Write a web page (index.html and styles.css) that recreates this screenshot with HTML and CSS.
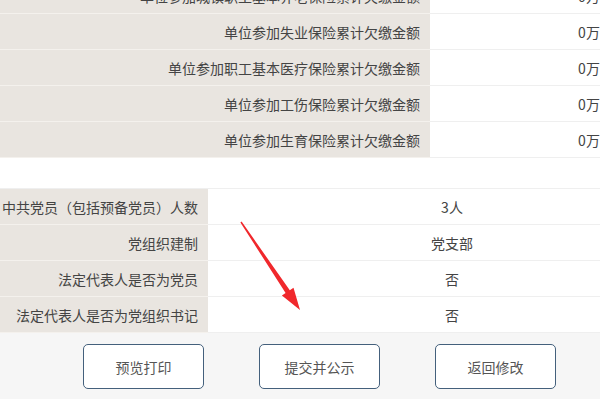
FILE: index.html
```html
<!DOCTYPE html>
<html>
  <head>
    <meta charset="utf-8" />
    <title>年报预览</title>
    <link rel="stylesheet" href="styles.css">
  </head>
  <body>
    <div class="page">
      <table class="info info1">
        <tr><td class="label">单位参加城镇职工基本养老保险累计欠缴金额</td><td class="val">0万元</td></tr>
        <tr><td class="label">单位参加失业保险累计欠缴金额</td><td class="val">0万元</td></tr>
        <tr><td class="label">单位参加职工基本医疗保险累计欠缴金额</td><td class="val">0万元</td></tr>
        <tr><td class="label">单位参加工伤保险累计欠缴金额</td><td class="val">0万元</td></tr>
        <tr><td class="label">单位参加生育保险累计欠缴金额</td><td class="val">0万元</td></tr>
      </table>

      <table class="info info2">
        <tr><td class="label">中共党员（包括预备党员）人数</td><td class="val">3人</td></tr>
        <tr><td class="label">党组织建制</td><td class="val">党支部</td></tr>
        <tr><td class="label">法定代表人是否为党员</td><td class="val">否</td></tr>
        <tr><td class="label">法定代表人是否为党组织书记</td><td class="val">否</td></tr>
      </table>

      <div class="btns">
        <button class="btn">预览打印</button>
        <button class="btn">提交并公示</button>
        <button class="btn">返回修改</button>
      </div>
    </div>

    <!-- 标注箭头 -->
    <svg class="arrow" width="72" height="102" viewBox="0 0 72 102">
      <polygon points="11.6,11.6 59.8,80.3 63.5,77.8 70,100 51.9,85.6 55.6,83.1 10.4,12.4" fill="#f0282c" />
    </svg>
  </body>
</html>
```

FILE: styles.css
```css
html,
body {
  margin: 0;
  padding: 0;
  width: 100%;
  height: 100%;
  overflow: hidden;
  background: #fff;
}
body {
  position: relative;
  font-family: "Microsoft YaHei", "Noto Sans CJK SC", sans-serif;
  font-size: 14px;
  color: #444;
}
.page {
  width: 780px;
  margin-top: -22px;
}
.info {
  border-collapse: collapse;
  table-layout: fixed;
}
.info td {
  height: 35px;
  padding: 0;
  border-bottom: 1px solid #efefef;
  line-height: 20px;
}
.info .label {
  background: #e9e5e0;
  text-align: right;
  padding-right: 10px;
  border-bottom-color: #f4f1ed;
}
.info .val {
  background: #fff;
  text-align: center;
}
.info1 {
  width: 762px;
}
.info1 .label {
  width: 420px;
}
.info2 {
  width: 696px;
  margin-top: 30px;
  border-top: 1px solid #efefef;
}
.info2 .label {
  width: 198px;
}
.btns {
  display: flex;
  gap: 55px;
  padding: 11px 0 20px 83px;
  background: #f6f6f6;
}
.btn {
  width: 121px;
  height: 45px;
  background: #fff;
  border: 1px solid #44607c;
  border-radius: 5px;
  font-family: "Microsoft YaHei", "Noto Sans CJK SC", sans-serif;
  font-size: 14px;
  color: #555;
  padding: 0;
}
.arrow {
  position: absolute;
  left: 230px;
  top: 210px;
}
```
